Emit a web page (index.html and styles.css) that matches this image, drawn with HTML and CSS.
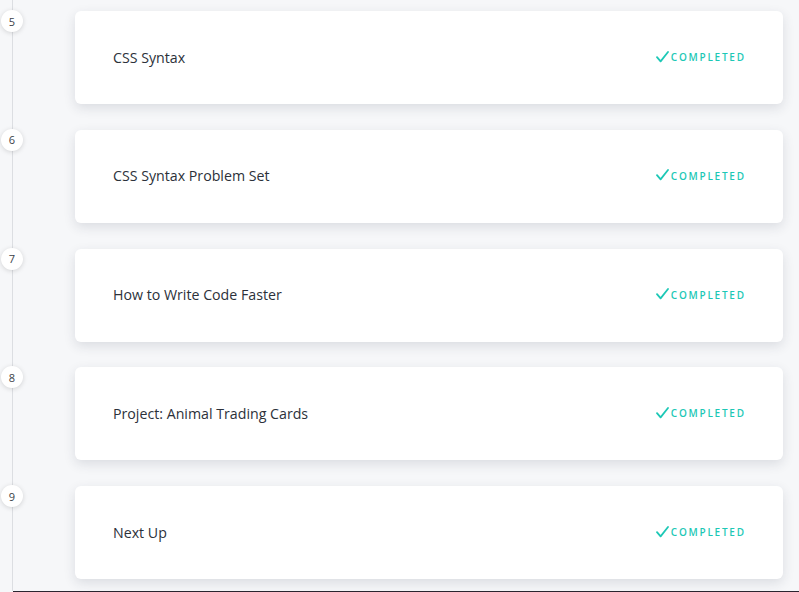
FILE: index.html
```html
<!DOCTYPE html>
<html lang="en">
<head>
<meta charset="utf-8">
<title>Lessons</title>
<link rel="stylesheet" href="styles.css">
</head>
<body>
<div class="page">
  <div class="timeline">
    <div class="row">
      <div class="marker"><span class="dot">5</span></div>
      <div class="card"><span class="title">CSS Syntax</span><span class="status"><svg class="check" width="13" height="12" viewBox="0 0 13 12"><path d="M1 6.2 L4.6 10.4 L12 1" fill="none" stroke="currentColor" stroke-width="1.8" stroke-linecap="round" stroke-linejoin="round"/></svg>COMPLETED</span></div>
    </div>
    <div class="row">
      <div class="marker"><span class="dot">6</span></div>
      <div class="card"><span class="title">CSS Syntax Problem Set</span><span class="status"><svg class="check" width="13" height="12" viewBox="0 0 13 12"><path d="M1 6.2 L4.6 10.4 L12 1" fill="none" stroke="currentColor" stroke-width="1.8" stroke-linecap="round" stroke-linejoin="round"/></svg>COMPLETED</span></div>
    </div>
    <div class="row">
      <div class="marker"><span class="dot">7</span></div>
      <div class="card"><span class="title">How to Write Code Faster</span><span class="status"><svg class="check" width="13" height="12" viewBox="0 0 13 12"><path d="M1 6.2 L4.6 10.4 L12 1" fill="none" stroke="currentColor" stroke-width="1.8" stroke-linecap="round" stroke-linejoin="round"/></svg>COMPLETED</span></div>
    </div>
    <div class="row">
      <div class="marker"><span class="dot">8</span></div>
      <div class="card"><span class="title">Project: Animal Trading Cards</span><span class="status"><svg class="check" width="13" height="12" viewBox="0 0 13 12"><path d="M1 6.2 L4.6 10.4 L12 1" fill="none" stroke="currentColor" stroke-width="1.8" stroke-linecap="round" stroke-linejoin="round"/></svg>COMPLETED</span></div>
    </div>
    <div class="row">
      <div class="marker"><span class="dot">9</span></div>
      <div class="card"><span class="title">Next Up</span><span class="status"><svg class="check" width="13" height="12" viewBox="0 0 13 12"><path d="M1 6.2 L4.6 10.4 L12 1" fill="none" stroke="currentColor" stroke-width="1.8" stroke-linecap="round" stroke-linejoin="round"/></svg>COMPLETED</span></div>
    </div>
  </div>
  <div class="bottom-bar"></div>
</div>
</body>
</html>
```
FILE: styles.css
```css
html, body {
  margin: 0;
  padding: 0;
  height: 100%;
  overflow: hidden;
}
body {
  background: #f6f7f9;
  font-family: "Open Sans", "Noto Sans", sans-serif;
  color: #333a44;
}
.page {
  height: 592px;
  display: flex;
  flex-direction: column;
}
.timeline {
  position: relative;
  flex: 1;
  padding: 10px 16px 0 0;
  display: flex;
  flex-direction: column;
  gap: 24.75px;
}
.timeline::before {
  content: "";
  position: absolute;
  left: 12px;
  top: 0;
  bottom: 0;
  width: 1px;
  background: #dcdee2;
}
.row {
  display: flex;
  align-items: flex-start;
}
.marker {
  width: 75px;
  flex: none;
  position: relative;
}
.dot {
  display: flex;
  align-items: center;
  justify-content: center;
  width: 22px;
  height: 22px;
  margin-left: 1px;
  border-radius: 50%;
  background: #ffffff;
  box-shadow: 0 1px 5px rgba(0, 0, 0, 0.15);
  font-size: 11px;
  font-weight: 500;
  color: #3b3f48;
  position: relative;
}
.card {
  flex: 1;
  margin-top: 1px;
  height: 93px;
  box-sizing: border-box;
  background: #ffffff;
  border-radius: 6px;
  box-shadow: 0 4px 12px rgba(40, 50, 70, 0.13);
  display: flex;
  align-items: center;
  justify-content: space-between;
  padding: 0 39px 1px 38px;
}
.title {
  font-size: 14.2px;
  font-weight: 500;
  color: #2c313a;
}
.status {
  display: flex;
  align-items: center;
  gap: 2px;
  font-size: 10px;
  font-weight: 600;
  letter-spacing: 1.75px;
  color: #1dc8b6;
  margin-right: -1.75px;
}
.check {
  display: block;
  margin-top: -1px;
}
.bottom-bar {
  height: 1px;
  background: #2b2530;
  margin-left: 13px;
  flex: none;
}
```
